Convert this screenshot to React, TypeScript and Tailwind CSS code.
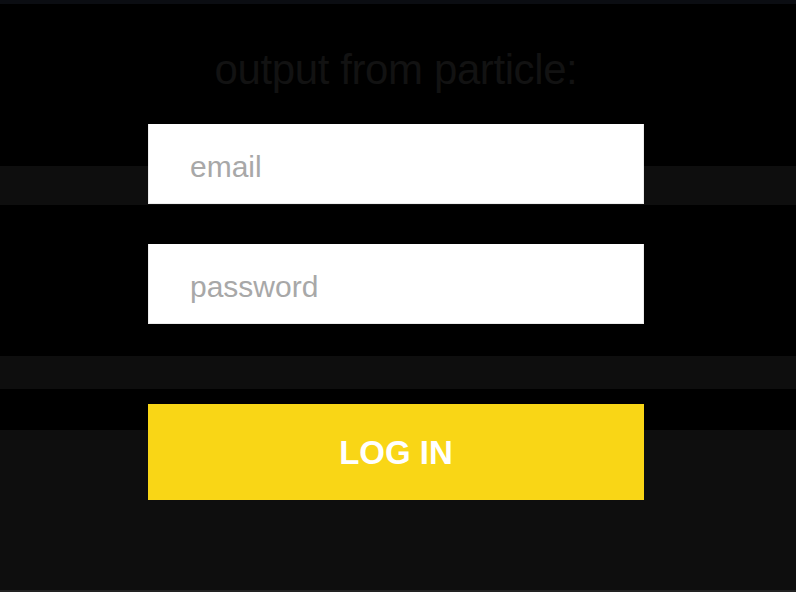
import React from 'react';

const App = () => {
  return (
    <div className="relative w-[796px] h-[592px] overflow-hidden bg-black font-['Liberation_Sans',Arial,sans-serif]">
      {/* dimmed page underneath */}
      <div className="flex flex-col h-full">
        <div className="h-[4px] bg-[#0b0d12]" />
        <div className="h-[162px]" />
        <div className="h-[39px] bg-[#0e0e0e]" />
        <div className="h-[151px]" />
        <div className="h-[33px] bg-[#0e0e0e]" />
        <div className="h-[41px]" />
        <div className="flex-1 bg-[#0e0e0e]" />
        <div className="h-[2px] bg-[#222222]" />
      </div>

      {/* login overlay */}
      <div className="absolute inset-0">
        <div className="ml-[148px] w-[496px] pt-[49px] flex flex-col">
          <h1 className="text-center text-[42px] leading-none tracking-[-0.4px] font-light text-[#121212]">
            output from particle:
          </h1>
          <input
            type="email"
            placeholder="email"
            className="mt-[33px] h-[80px] w-full bg-white border-r border-b border-l border-[#ececec] pl-[41px] pt-[6px] text-[30px] text-[#333] outline-none placeholder:text-[#a8a8a8]"
          />
          <input
            type="password"
            placeholder="password"
            className="mt-[40px] h-[80px] w-full bg-white border-r border-b border-l border-[#ececec] pl-[41px] pt-[6px] text-[30px] text-[#333] outline-none placeholder:text-[#a8a8a8]"
          />
          <button className="mt-[80px] h-[96px] w-full bg-[#f9d616] text-white text-[33px] font-bold leading-none">
            LOG IN
          </button>
        </div>
      </div>
    </div>
  );
};

export default App;
